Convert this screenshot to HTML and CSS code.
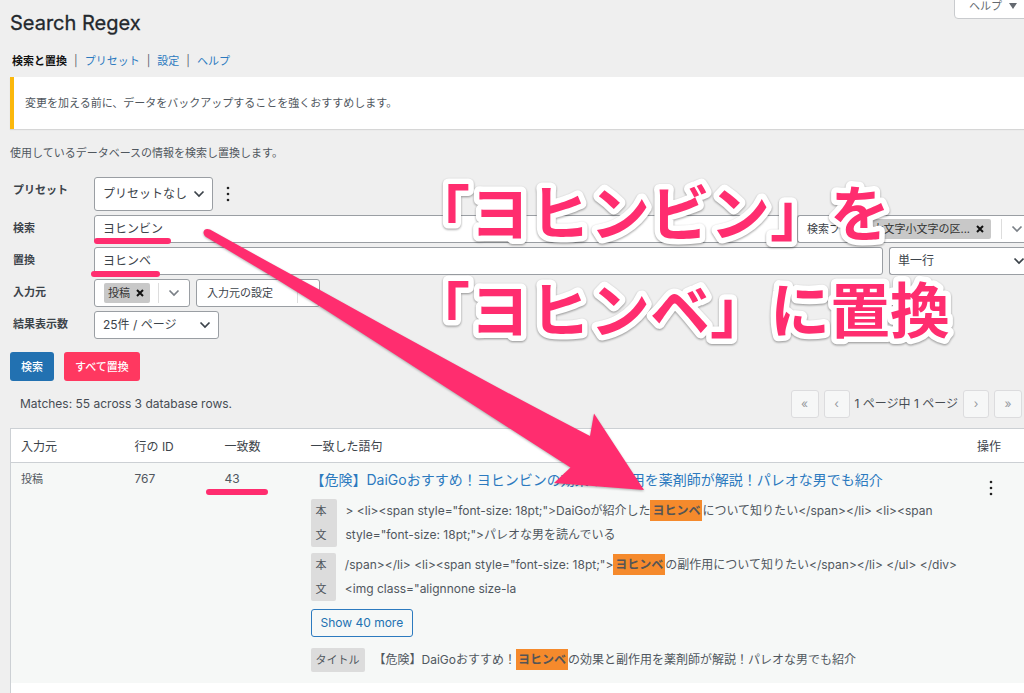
FILE: index.html
```html
<!DOCTYPE html>
<html lang="ja">
<head>
<meta charset="utf-8">
<title>Search Regex</title>
<link rel="stylesheet" href="styles.css">
</head>
<body>
<svg class="defs" aria-hidden="true">
  <symbol id="chevron" viewBox="0 0 12 8"><path d="M1.5 1.5 6 6l4.500-4.500" fill="none" stroke="currentColor" stroke-width="1.700"/></symbol>
  <symbol id="cross" viewBox="0 0 8 8"><path d="M1 1l6 6M7 1L1 7" fill="none" stroke="currentColor" stroke-width="2"/></symbol>
  <symbol id="dots" viewBox="0 0 4 16"><circle cx="2" cy="2" r="1.300"/><circle cx="2" cy="8" r="1.300"/><circle cx="2" cy="14" r="1.300"/></symbol>
</svg>
<div class="page">
  <button class="help-tab" type="button">ヘルプ <span class="caret"></span></button>
  <h1 class="title">Search Regex</h1>
  <nav class="tabs">
    <a class="current" href="#search">検索と置換</a><span>|</span><a href="#presets">プリセット</a><span>|</span><a href="#options">設定</a><span>|</span><a href="#help">ヘルプ</a>
  </nav>
  <div class="notice">変更を加える前に、データをバックアップすることを強くおすすめします。</div>
  <p class="intro">使用しているデータベースの情報を検索し置換します。</p>

  <form class="form">
    <div class="row row-tall">
      <label for="preset">プリセット</label>
      <div class="select preset"><select id="preset"><option>プリセットなし</option></select><svg class="chev"><use href="#chevron"/></svg></div>
      <button class="more" type="button" aria-label="メニュー"><svg><use href="#dots"/></svg></button>
    </div>
    <div class="row">
      <label for="search">検索</label>
      <input class="text" id="search" type="text" value="ヨヒンビン">
      <div class="multi flags">
        <span>検索フラグ</span>
        <span class="chip">大文字小文字の区...<button type="button" aria-label="削除"><svg><use href="#cross"/></svg></button></span>
        <button class="drop" type="button" aria-label="検索フラグを開く"><svg><use href="#chevron"/></svg></button>
      </div>
    </div>
    <div class="row">
      <label for="replace">置換</label>
      <input class="text" id="replace" type="text" value="ヨヒンベ">
      <div class="select lines"><select aria-label="行の種類"><option>単一行</option></select><svg class="chev"><use href="#chevron"/></svg></div>
    </div>
    <div class="row">
      <span class="label">入力元</span>
      <div class="multi source">
        <span class="chip">投稿<button type="button" aria-label="削除"><svg><use href="#cross"/></svg></button></span>
        <button class="drop" type="button" aria-label="入力元を開く"><svg><use href="#chevron"/></svg></button>
      </div>
      <div class="multi source-options">
        <span>入力元の設定</span>
        <button class="drop" type="button" aria-label="入力元の設定を開く"><svg><use href="#chevron"/></svg></button>
      </div>
    </div>
    <div class="row">
      <label for="count">結果表示数</label>
      <div class="select count"><select id="count"><option>25件 / ページ</option></select><svg class="chev"><use href="#chevron"/></svg></div>
    </div>
    <div class="actions">
      <button class="primary" type="button">検索</button>
      <button class="danger" type="button">すべて置換</button>
    </div>
  </form>

  <div class="summary">
    <span>Matches: 55 across 3 database rows.</span>
    <div class="pager">
      <button type="button" disabled>«</button>
      <button class="narrow" type="button" disabled>‹</button>
      <span>1 ページ中 1 ページ</span>
      <button class="narrow" type="button" disabled>›</button>
      <button type="button" disabled>»</button>
    </div>
  </div>

  <table class="results">
    <colgroup><col class="c-source"><col class="c-id"><col class="c-count"><col><col class="c-action"></colgroup>
    <thead><tr><th>入力元</th><th>行の ID</th><th>一致数</th><th>一致した語句</th><th>操作</th></tr></thead>
    <tbody><tr>
      <td>投稿</td><td class="num">767</td><td class="num">43</td>
      <td>
        <a class="post" href="#post">【危険】DaiGoおすすめ！ヨヒンビンの効果と副作用を薬剤師が解説！パレオな男でも紹介</a>
        <div class="snippet"><span class="tag body-tag">本文</span><p>&gt; &lt;li&gt;&lt;span style="font-size: 18pt;"&gt;DaiGoが紹介した<mark>ヨヒンベ</mark>について知りたい&lt;/span&gt;&lt;/li&gt; &lt;li&gt;&lt;span<br>style="font-size: 18pt;"&gt;パレオな男を読んでいる</p></div>
        <div class="snippet"><span class="tag body-tag">本文</span><p>/span&gt;&lt;/li&gt; &lt;li&gt;&lt;span style="font-size: 18pt;"&gt;<mark>ヨヒンベ</mark>の副作用について知りたい&lt;/span&gt;&lt;/li&gt; &lt;/ul&gt; &lt;/div&gt;<br>&lt;img class="alignnone size-la</p></div>
        <button class="show-more" type="button">Show 40 more</button>
        <div class="snippet last"><span class="tag">タイトル</span><p>【危険】DaiGoおすすめ！<mark>ヨヒンベ</mark>の効果と副作用を薬剤師が解説！パレオな男でも紹介</p></div>
      </td>
      <td><button class="more" type="button" aria-label="操作"><svg><use href="#dots"/></svg></button></td>
    </tr></tbody>
  </table>
  <div class="table-rest"></div>

  <svg class="notes" width="1024" height="693" viewBox="0 0 1024 693">
    <g class="underlines"><path d="M97 241H168M94 274H157M209 492H265"/></g>
    <path class="arrow" d="M210 229.500Q270 263 320 290Q390 329 460 367Q524 402 590 436L594 413.500L644 490L554 483L570.500 467.500Q509 428 447 388Q396 355 346 323Q309 299 273 277L206 237C201 233 204 227 210 229.500Z"/>
    <g class="callout"><text x="410" y="236">「ヨヒンビン」を</text><text x="410" y="333">「ヨヒンベ」に置換</text></g>
  </svg>
</div>
</body>
</html>
```

FILE: styles.css
```css
* { box-sizing: border-box; }
body {
  margin: 0;
  background: #efefef;
  color: #50575e;
  font: 11px/16px Inter, "Noto Sans CJK JP", sans-serif;
}
button, input, select { font: inherit; color: inherit; margin: 0; }
button { border: 0; padding: 0; background: none; cursor: pointer; }
a { color: #2c7abf; text-decoration: none; }
h1, p { margin: 0; }
.defs { position: absolute; width: 0; height: 0; }
.page {
  position: relative;
  display: flex;
  flex-direction: column;
  min-height: 100vh;
  padding-left: 10px;
  overflow: hidden;
}
.help-tab {
  position: absolute;
  top: -8px;
  right: -8px;
  display: flex;
  align-items: center;
  gap: 7px;
  height: 27px;
  padding: 0 14px;
  background: #fff;
  border: 1px solid #c9cbce;
  border-radius: 0 0 4px 4px;
  color: #646970;
}
.caret { border: 4px solid transparent; border-top: 6px solid #646970; border-bottom: 0; }
.title { padding-top: 9px; color: #23282d; font-size: 20px; font-weight: 400; line-height: 28px; -webkit-text-stroke: 0.3px; }
.tabs { display: flex; gap: 7px; padding: 16px 2px 8px; color: #646970; }
.tabs .current { color: #111; font-weight: 700; }
.notice {
  padding: 18px 11px;
  background: #fff;
  border-left: 4px solid #fbb80c;
  box-shadow: 0 1px 1px rgba(0, 0, 0, 0.1);
}
.intro { padding: 16px 0; }

.form { display: flex; flex-direction: column; gap: 4px; }
.row { display: flex; gap: 6px; height: 28px; }
.row-tall { height: 34px; }
.row > label, .row > .label {
  flex: 0 0 78px;
  padding: 5px 3px;
  color: #3c434a;
  font-weight: 700;
}
.text, .select, .multi {
  background: #fff;
  border: 1px solid #9a9ea3;
  border-radius: 3px;
  color: #3c434a;
  font-size: 12px;
}
.text { flex: 1; min-width: 0; padding: 0 8px; }
.select { position: relative; }
.select select {
  width: 100%;
  height: 100%;
  padding: 0 8px;
  border: 0;
  background: transparent;
  appearance: none;
}
.chev { position: absolute; right: 7px; top: 50%; width: 12px; height: 8px; margin-top: -4px; pointer-events: none; }
.preset { width: 119px; }
.count { width: 125px; }
.lines { width: 135px; }
.lines .chev { right: -1px; }
.row > .lines, .row > .flags { border-right: 0; border-radius: 3px 0 0 3px; }
.multi { display: flex; align-items: center; gap: 6px; padding-left: 9px; font-size: 11px; }
.chip {
  display: flex;
  align-items: center;
  gap: 6px;
  height: 20px;
  padding: 0 6px 0 4px;
  background: #c8c8c8;
  border-radius: 2px;
  color: #333;
  white-space: nowrap;
}
.chip button, .chip svg { display: block; width: 8px; height: 8px; color: #111; }
.drop { height: 20px; margin-left: auto; padding: 0 9px; border-left: 1px solid #ddd; color: #7b8087; }
.drop svg { display: block; width: 12px; height: 8px; }
.flags { width: 227px; }
.flags .chip { margin-left: auto; padding-right: 7px; }
.flags .drop { margin-left: 4px; margin-right: -8px; }
.source { width: 96px; }
.source-options { width: 124px; padding-left: 10px; }
.source-options .drop { padding-right: 0; }
.source-options svg { visibility: hidden; }
.more svg { display: block; width: 4px; height: 16px; fill: #222; }
.row .more { margin-left: 7px; }
.actions { display: flex; gap: 10px; padding-top: 9px; }
.actions button { height: 29px; padding: 0 11px; border-radius: 3px; color: #fff; font-weight: 500; }
.actions .primary { background: #2271b1; }
.actions .danger { background: #ff3860; }

.summary {
  display: flex;
  align-items: center;
  justify-content: space-between;
  padding: 9px 2px 10px 10px;
  color: #464c53;
  font-size: 12px;
}
.pager { display: flex; align-items: center; gap: 5px; }
.pager span { font-size: 12px; }
.pager button { width: 28px; height: 28px; background: #f6f7f7; border: 1px solid #dcdcde; border-radius: 3px; color: #969a9f; }
.pager .narrow { width: 26px; }

.results {
  width: 100%;
  table-layout: fixed;
  border-collapse: collapse;
  background: #f6f8f7;
  border: 1px solid #ccd0d4;
  border-right: 0;
  border-bottom: 0;
}
.c-source { width: 114px; }
.c-id { width: 90px; }
.c-count { width: 86px; }
.c-action { width: 57px; }
.results th {
  height: 34px;
  padding: 2px 10px 0;
  background: #fff;
  border-bottom: 1px solid #ccd0d4;
  color: #3c434a;
  font-size: 12px;
  font-weight: 400;
  text-align: left;
}
.results td { padding: 8px 10px 11px; vertical-align: top; white-space: nowrap; }
.results td.num { font-size: 12px; }
.post { display: block; margin-bottom: 10px; font-size: 14px; line-height: 18px; }
.snippet { display: flex; gap: 9px; margin-bottom: 6px; line-height: 24px; }
.snippet p { font-size: 12px; }
.snippet.last { margin: 11px 0 0; }
.tag { padding: 0 5px; background: #dcdcdc; border-radius: 2px; }
.body-tag { width: 26px; white-space: normal; word-break: break-all; }
mark { display: inline-block; padding: 0 2px; background: #f58a2c; color: #555; font-weight: 700; line-height: 21px; }
.show-more {
  display: block;
  height: 28px;
  margin-top: 8px;
  padding: 0 9px;
  border: 1px solid #2c7abf;
  border-radius: 3px;
  color: #2271b1;
  font-size: 12px;
}
.results .more { display: block; margin: 9px 0 0 12px; }
.table-rest { flex: 1; background: #fff; border-left: 1px solid #ccd0d4; }

.notes { position: absolute; top: 0; left: 0; pointer-events: none; }
.underlines { fill: none; stroke: #ff2d6f; stroke-width: 6px; stroke-linecap: round; }
.arrow { fill: #ff2d6f; filter: drop-shadow(0 1px 1px rgba(0, 0, 0, 0.3)); }
.callout {
  fill: #ff2d6f;
  stroke: #fff;
  stroke-width: 11px;
  stroke-linejoin: round;
  paint-order: stroke;
  font-size: 60px;
  font-weight: 700;
  filter: drop-shadow(0 1px 1px rgba(0, 0, 0, 0.4));
}
```
